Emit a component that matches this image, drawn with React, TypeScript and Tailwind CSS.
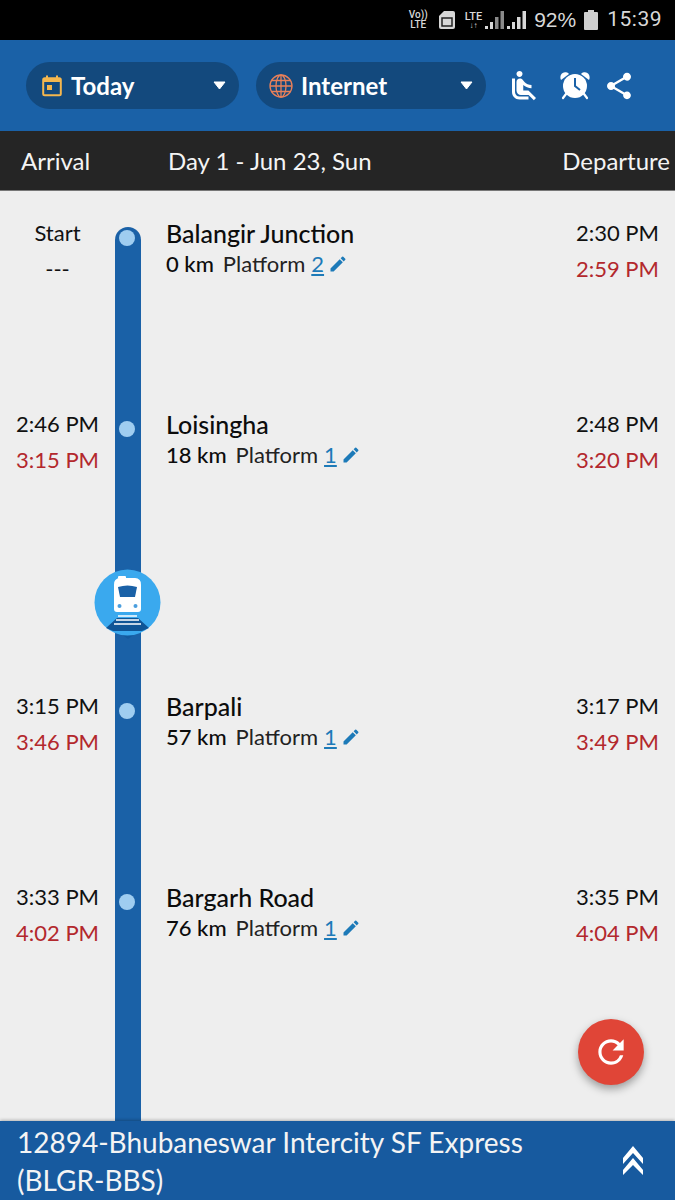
import { MdAirlineSeatReclineNormal, MdEdit, MdRefresh, MdShare } from "react-icons/md";

type Stop = {
  arrival: string;
  arrivalLive: string;
  name: string;
  km: string;
  platform: string;
  departure: string;
  departureLive: string;
};

const stops: Stop[] = [
  { arrival: "Start", arrivalLive: "---", name: "Balangir Junction", km: "0 km", platform: "2", departure: "2:30 PM", departureLive: "2:59 PM" },
  { arrival: "2:46 PM", arrivalLive: "3:15 PM", name: "Loisingha", km: "18 km", platform: "1", departure: "2:48 PM", departureLive: "3:20 PM" },
  { arrival: "3:15 PM", arrivalLive: "3:46 PM", name: "Barpali", km: "57 km", platform: "1", departure: "3:17 PM", departureLive: "3:49 PM" },
  { arrival: "3:33 PM", arrivalLive: "4:02 PM", name: "Bargarh Road", km: "76 km", platform: "1", departure: "3:35 PM", departureLive: "4:04 PM" },
];

const SignalBars = ({ dim }: { dim?: boolean }) => (
  <svg width="22" height="22" viewBox="0 0 22 22" fill={dim ? "#8a8a8a" : "#d8d8d8"}>
    <rect x="1" y="17" width="3" height="3" fill="#d8d8d8" />
    <rect x="6" y="13" width="3" height="7" fill="#d8d8d8" />
    <rect x="11" y="8" width="3.5" height="12" />
    <rect x="16.5" y="2" width="3.5" height="18" />
  </svg>
);

const StatusBar = () => (
  <div className="h-10 bg-black flex items-center justify-end pr-[13px] text-[#d8d8d8] font-['Roboto',sans-serif]">
    <div className="flex flex-col items-center text-[10px] leading-[10px] font-medium mr-[10px]">
      <span>Vo))</span>
      <span>LTE</span>
    </div>
    <svg width="18" height="20" viewBox="0 0 18 20" className="mr-[9px]">
      <path d="M2 5l4-4h9a2 2 0 0 1 2 2v14a2 2 0 0 1-2 2H3a2 2 0 0 1-2-2V6z" fill="#d8d8d8" />
      <rect x="4" y="8" width="10" height="8" fill="none" stroke="#222" strokeWidth="1.5" />
    </svg>
    <div className="flex flex-col items-center text-[11px] leading-[11px] font-medium mr-[2px]">
      <span>LTE</span>
      <span className="text-[8px] leading-[8px]">↓↑</span>
    </div>
    <SignalBars dim />
    <SignalBars />
    <span className="text-[21px] ml-[6px] mr-[8px] font-['Liberation_Sans',sans-serif]">92%</span>
    <svg width="14" height="20" viewBox="0 0 14 20" className="mr-[9px]">
      <path d="M4 0h6v2h3a1 1 0 0 1 1 1v16a1 1 0 0 1-1 1H1a1 1 0 0 1-1-1V3a1 1 0 0 1 1-1h3z" fill="#cfcfcf" />
    </svg>
    <span className="text-[21px] tracking-[0.5px]">15:39</span>
  </div>
);

const Caret = () => (
  <svg width="13" height="9" viewBox="0 0 13 9" className="shrink-0">
    <path d="M1 1h11L6.5 8z" fill="#fff" stroke="#fff" strokeLinejoin="round" />
  </svg>
);

const CalendarIcon = () => (
  <svg width="20" height="22" viewBox="0 0 20 22" className="shrink-0">
    <rect x="1.2" y="3.2" width="17.6" height="17" rx="1.5" fill="none" stroke="#f5b74e" strokeWidth="2" />
    <rect x="1" y="3" width="18" height="4" fill="#f5b74e" />
    <rect x="4" y="0.5" width="2" height="4" fill="#f5b74e" />
    <rect x="14" y="0.5" width="2" height="4" fill="#f5b74e" />
    <rect x="5" y="10" width="5" height="5" fill="#f5b74e" />
  </svg>
);

const GlobeIcon = () => (
  <svg width="24" height="24" viewBox="0 0 24 24" fill="none" stroke="#e8805a" strokeWidth="1.3" className="shrink-0">
    <circle cx="12" cy="12" r="11" />
    <ellipse cx="12" cy="12" rx="5" ry="11" />
    <path d="M12 1v22M1 12h22M2.6 6.5h18.8M2.6 17.5h18.8" />
  </svg>
);

const AlarmIcon = () => (
  <svg width="32" height="30" viewBox="0 0 32 30">
    <path d="M2 9C0 5 3 0 8 1.5c1 .4 1.5.8 2 1.5z" fill="#fff" />
    <path d="M30 9c2-4-1-9-6-7.500-1 .4-1.500.8-2 1.500z" fill="#fff" />
    <path d="M7 23l-3 4M25 23l3 4" stroke="#fff" strokeWidth="2.200" strokeLinecap="round" />
    <circle cx="16" cy="15" r="12" fill="#fff" />
    <path d="M16 7v8l5 4" fill="none" stroke="#1a61a7" strokeWidth="2" />
  </svg>
);

const Toolbar = () => (
  <div className="h-[91px] bg-[#1a61a7] flex items-center pl-[26px]">
    <div className="w-[213px] h-[47px] rounded-full bg-[#13497d] flex items-center pl-[16px] pr-[13px] mr-[17px]">
      <CalendarIcon />
      <span className="ml-[9px] flex-1 text-[24px] font-bold text-white">Today</span>
      <Caret />
    </div>
    <div className="w-[230px] h-[47px] rounded-full bg-[#13497d] flex items-center pl-[13px] pr-[13px]">
      <GlobeIcon />
      <span className="ml-[8px] flex-1 text-[24px] font-bold text-white">Internet</span>
      <Caret />
    </div>
    <MdAirlineSeatReclineNormal className="text-white text-[36px] ml-[20px]" />
    <div className="ml-[17px] flex">
      <AlarmIcon />
    </div>
    <MdShare className="text-white text-[32px] ml-[12px]" />
  </div>
);

const DayBar = () => (
  <div className="h-[60px] bg-[#252525] border-b border-b-[#777] flex items-center justify-between pl-[21px] pr-[5px] text-[24px] text-[#f4f4f4]">
    <span className="w-[147px]">Arrival</span>
    <span className="flex-1">Day 1 - Jun 23, Sun</span>
    <span>Departure</span>
  </div>
);

const Rail = ({ first }: { first?: boolean }) =>
  first ? (
    <div className="w-[26px] ml-[115px] mt-[12px] rounded-t-full bg-[#1a61a7]" />
  ) : (
    <div className="w-[26px] ml-[115px] bg-[#1a61a7]" />
  );

const StopRow = ({ stop, first }: { stop: Stop; first?: boolean }) => (
  <div className="relative flex h-[191px] items-stretch">
    <div className="absolute left-0 top-0 w-[115px] text-center text-[22px] leading-[36px] text-[#111]">
      <div>{stop.arrival}</div>
      <div className={first ? "text-[#111]" : "text-[#b3282d]"}>{stop.arrivalLive}</div>
    </div>
    <Rail first={first} />
    <div className="absolute left-[119px] top-[15px] w-[16px] h-[16px] rounded-full bg-[#9fcdf0]" />
    <div className="pl-[25px] flex-1">
      <div className="text-[25px] leading-[36px] font-medium text-[#0c0c0c]">{stop.name}</div>
      <div className="flex items-center text-[22px] leading-[30px] -mt-[2px] text-[#222]">
        <span className="font-medium text-[#0c0c0c]">{stop.km}</span>
        <span className="ml-[9px]">Platform</span>
        <span className="ml-[6px] underline underline-offset-2 text-[#1d7ab8]">{stop.platform}</span>
        <MdEdit className="ml-[4px] text-[#1d7ab8] text-[20px]" />
      </div>
    </div>
    <div className="pr-[16px] text-right text-[22px] leading-[36px] text-[#111]">
      <div>{stop.departure}</div>
      <div className="text-[#b3282d]">{stop.departureLive}</div>
    </div>
  </div>
);

// the running train, sits on the rail between two stops
const TrainMarker = () => (
  <svg width="68" height="72" viewBox="0 0 68 72" className="absolute left-[94px] -top-[28px]">
    <path d="M34 70L16 57h36z" fill="#135a9e" />
    <circle cx="33.500" cy="33.500" r="33" fill="#3aa9ee" />
    <path d="M12 59l11-10h21l11 10-7 3H19z" fill="#0f5596" />
    <rect x="24" y="7" width="8" height="3" rx="1" fill="#fff" />
    <path d="M20 16a6 6 0 0 1 6-7h15a6 6 0 0 1 6 7v24a3 3 0 0 1-3 3H23a3 3 0 0 1-3-3z" fill="#fff" />
    <path d="M24 18q9.500-3 19 0l-2 10h-15z" fill="#1a61a7" />
    <circle cx="25.500" cy="37" r="2" fill="#4a9ede" />
    <circle cx="41.500" cy="37" r="2" fill="#4a9ede" />
    <path d="M24 47h19M22 51h23M20 55h27" stroke="#fff" strokeWidth="1.500" />
  </svg>
);

const App = () => (
  <div className="w-[675px] h-[1200px] overflow-hidden flex flex-col bg-[#eeeeee] font-['Lato',sans-serif]">
    <StatusBar />
    <Toolbar />
    <DayBar />
    <div className="relative flex-1 flex flex-col pt-[24px] min-h-0">
      <StopRow stop={stops[0]} first />
      <StopRow stop={stops[1]} />
      <div className="relative flex h-[91px] shrink-0">
        <Rail />
        <TrainMarker />
      </div>
      <StopRow stop={stops[2]} />
      <StopRow stop={stops[3]} />
      <div className="flex flex-1">
        <Rail />
      </div>
      <button className="absolute right-[31px] bottom-[36px] w-[66px] h-[66px] rounded-full bg-[#e04537] flex items-center justify-center shadow-[0_4px_8px_rgba(0,0,0,0.35)]">
        <MdRefresh className="text-white text-[38px]" />
      </button>
    </div>
    <div className="h-[79px] bg-[#175a9f] flex items-center pl-[17px] shadow-[0_-1px_3px_rgba(0,0,0,0.25)] z-10">
      <div className="w-[590px] text-[28px] leading-[38px] text-[#f4f4f4]">
        12894-Bhubaneswar Intercity SF Express (BLGR-BBS)
      </div>
      <svg width="22" height="30" viewBox="0 0 22 30" className="ml-[15px]">
        <path d="M11 0l10 12v6L11 7 1 18v-6z" fill="#fff" />
        <path d="M11 12l10 12v5L11 19 1 29v-5z" fill="#fff" />
      </svg>
    </div>
  </div>
);

export default App;
